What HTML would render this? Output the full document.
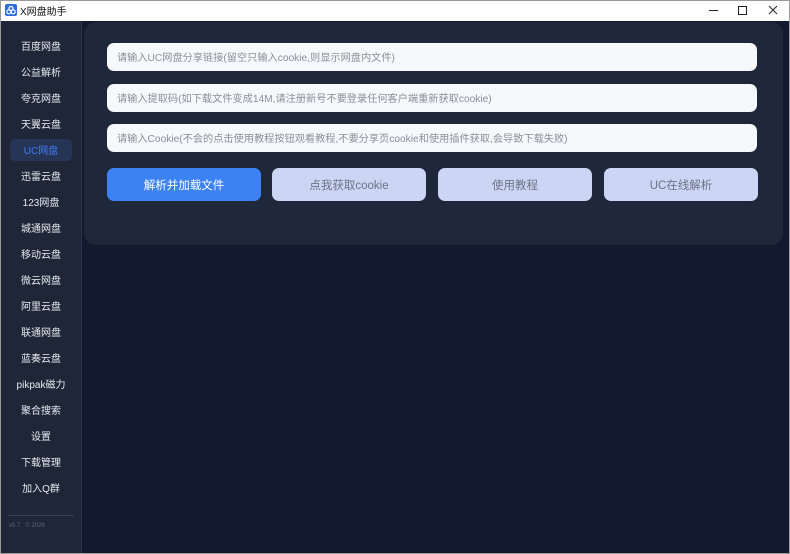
<!DOCTYPE html>
<html><head><meta charset="utf-8"><style>
*{margin:0;padding:0;box-sizing:border-box}
body{width:790px;height:554px;overflow:hidden;background:#111a2e;font-family:"Liberation Sans","Noto Sans CJK SC",sans-serif;position:relative}
.title{position:absolute;left:0;top:0;width:790px;height:21px;background:#fff;font-size:10px;color:#111}
.title .t{position:absolute;left:20px;top:3px}
.side{position:absolute;left:0;top:21px;width:82px;height:533px;background:#1e2638;border-right:1px solid #2a3346}
.item{position:absolute;left:0;width:82px;text-align:center;font-size:10px;color:#e6e9ef;height:14px;line-height:14px;margin-top:2px}
.act{position:absolute;left:10px;top:118px;width:62px;height:22px;background:#263556;border-radius:5px}
.card{position:absolute;left:84px;top:22px;width:699px;height:223px;background:#1f283b;border-radius:12px}
.in{position:absolute;left:107px;width:650px;height:28px;background:#f7f8fc;border-radius:7px;font-size:10.2px;color:#8a8f99;padding-left:10px;line-height:28px;padding-top:2px}
.btn{position:absolute;top:168px;width:154px;height:33px;border-radius:7px;background:#ccd5f3;color:#6b7385;font-size:11.5px;text-align:center;line-height:33px;padding-top:2px}
.bd{position:absolute;background:#9a9a9a}
</style></head><body>
<div class="title">
<svg style="position:absolute;left:5px;top:4px" width="12" height="12" viewBox="0 0 12 12"><rect width="12" height="12" rx="2" fill="#2d6fd6"/><circle cx="6" cy="4.5" r="2" fill="none" stroke="#fff" stroke-width="1.2"/><circle cx="3.8" cy="7.8" r="2" fill="none" stroke="#fff" stroke-width="1.2"/><circle cx="8.2" cy="7.8" r="2" fill="none" stroke="#fff" stroke-width="1.2"/></svg>
<span class="t">X网盘助手</span>
<div style="position:absolute;left:709px;top:10px;width:9px;height:1px;background:#222"></div>
<div style="position:absolute;left:738px;top:6px;width:9px;height:9px;border:1px solid #222"></div>
<svg style="position:absolute;left:768px;top:5px" width="10" height="10"><path d="M1 1L9 9M9 1L1 9" stroke="#222" stroke-width="1"/></svg>
</div>
<div class="side">
<div class="act"></div>
<div class="item" style="top:18px">百度网盘</div>
<div class="item" style="top:44px">公益解析</div>
<div class="item" style="top:70px">夸克网盘</div>
<div class="item" style="top:96px">天翼云盘</div>
<div class="item" style="top:122px;color:#3f7bf0">UC网盘</div>
<div class="item" style="top:148px">迅雷云盘</div>
<div class="item" style="top:174px">123网盘</div>
<div class="item" style="top:200px">城通网盘</div>
<div class="item" style="top:226px">移动云盘</div>
<div class="item" style="top:252px">微云网盘</div>
<div class="item" style="top:278px">阿里云盘</div>
<div class="item" style="top:304px">联通网盘</div>
<div class="item" style="top:330px">蓝奏云盘</div>
<div class="item" style="top:356px">pikpak磁力</div>
<div class="item" style="top:382px">聚合搜索</div>
<div class="item" style="top:408px">设置</div>
<div class="item" style="top:434px">下载管理</div>
<div class="item" style="top:460px">加入Q群</div>
<div style="position:absolute;left:8px;top:494px;width:66px;height:1px;background:#334057"></div>
<div style="position:absolute;left:9px;top:502px;font-size:6px;color:#5d6678">v5.7 &nbsp; © 2026</div>
</div>
<div class="card"></div>
<div class="in" style="top:43px">请输入UC网盘分享链接(留空只输入cookie,则显示网盘内文件)</div>
<div class="in" style="top:84px">请输入提取码(如下载文件变成14M,请注册新号不要登录任何客户端重新获取cookie)</div>
<div class="in" style="top:124px">请输入Cookie(不会的点击使用教程按钮观看教程,不要分享页cookie和使用插件获取,会导致下载失败)</div>
<div class="btn" style="left:107px;background:#3d82f4;color:#fff">解析并加载文件</div>
<div class="btn" style="left:272px">点我获取cookie</div>
<div class="btn" style="left:438px">使用教程</div>
<div class="btn" style="left:604px">UC在线解析</div>
<div class="bd" style="left:0;top:0;width:790px;height:1px"></div>
<div class="bd" style="left:0;top:0;width:1px;height:554px"></div>
<div class="bd" style="left:789px;top:0;width:1px;height:554px"></div>
<div class="bd" style="left:0;top:553px;width:790px;height:1px"></div>
</body></html>
